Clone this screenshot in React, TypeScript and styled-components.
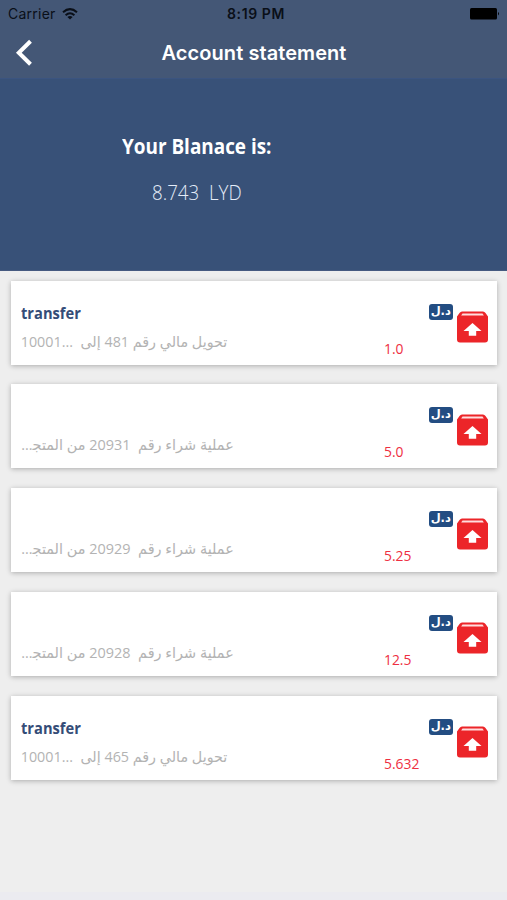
import React from "react";
import styled, { createGlobalStyle } from "styled-components";

const GlobalStyle = createGlobalStyle`
  * { box-sizing: border-box; }
  body { margin: 0; background: #eeeeee; }
`;

const Screen = styled.div`
  width: 507px;
  height: 900px;
  display: flex;
  flex-direction: column;
  overflow: hidden;
  background: #eeeeee;
  font-family: "Open Sans", "DejaVu Sans", sans-serif;
`;

const Header = styled.header`
  height: 78px;
  background: #445776;
  flex: none;
`;

const StatusBar = styled.div`
  height: 27px;
  padding: 0 7px 0 8px;
  display: grid;
  grid-template-columns: 1fr auto 1fr;
  align-items: center;
  color: #0a0f18;
  font-family: Inter, sans-serif;
  font-size: 14px;
  line-height: 27px;
`;

const Carrier = styled.div`
  display: flex;
  align-items: center;
  gap: 6px;
  letter-spacing: 0.25px;
`;

const Clock = styled.div`
  padding-left: 4px;
  font-weight: 600;
  letter-spacing: 0.6px;
`;

const BatteryIcon = styled.svg`
  justify-self: end;
  display: block;
`;

const NavBar = styled.div`
  height: 51px;
  padding: 0 15px;
  display: grid;
  grid-template-columns: 20px 1fr 20px;
  align-items: center;
`;

const BackButton = styled.button`
  padding: 0;
  border: 0;
  background: none;
  height: 28px;
  display: flex;
`;

const Title = styled.h1`
  margin: 0;
  padding-left: 1px;
  color: #fff;
  text-align: center;
  font: 600 20px/50px Inter, sans-serif;
  letter-spacing: 0.07px;
`;

const BalancePanel = styled.section`
  height: 193px;
  flex: none;
  padding: 53px 0 0 122px;
  background: #385178;
  border-top: 1px solid #3b5480;
  border-bottom: 1px solid #465a80;
  color: #fff;
`;

const Fit = styled.span<{ $x?: number; $from?: string }>`
  display: inline-block;
  white-space: pre;
  transform: scaleX(${(p) => p.$x ?? 1});
  transform-origin: ${(p) => p.$from ?? "left"} center;
`;

const BalanceLabel = styled.div`
  height: 28px;
  font-size: 21px;
  font-weight: 700;
  line-height: 28px;
`;

const BalanceValue = styled.div`
  height: 28px;
  margin: 19px 0 0 30px;
  font-size: 19.5px;
  font-weight: 300;
  line-height: 28px;
  color: #e4ecf8;
`;

const List = styled.main`
  padding: 9.6px 10px 0 10.5px;
  display: flex;
  flex-direction: column;
  gap: 19.8px;
  flex: 1;
`;

const Card = styled.article`
  height: 84px;
  flex: none;
  padding: 0 9px 0 10px;
  display: grid;
  grid-template-columns: 214px 1fr 45.5px 25px 34.5px;
  background: #fff;
  box-shadow: 0 1px 5px rgba(0, 0, 0, 0.28);
`;

const Details = styled.div`
  padding-top: 20px;
`;

const Kind = styled.div`
  height: 24px;
  color: #344c77;
  font-size: 16.5px;
  font-weight: 700;
  line-height: 24px;
`;

const Description = styled.div<{ $width: number }>`
  width: ${(p) => p.$width}px;
  height: 24px;
  margin-top: 4px;
  direction: rtl;
  white-space: nowrap;
  text-align: right;
  color: #b3b3b3;
  font-family: "Open Sans", "DejaVu Sans", sans-serif;
  font-size: 15px;
  line-height: 24px;
`;

const Amount = styled.div`
  grid-column: 3;
  padding: 57px 0 0 0.7px;
  color: #ee2f42;
  font-size: 14px;
  font-weight: 500;
  line-height: 22px;
`;

const Currency = styled.div`
  width: 24.5px;
  height: 16px;
  margin-top: 23px;
  border-radius: 3px;
  background: #234d82;
  color: #fff;
  text-align: center;
  direction: rtl;
  font: 700 11.5px/14px "DejaVu Sans", sans-serif;
`;

const OutIcon = styled.svg`
  margin: 30px 0 0 3px;
  width: 31px;
  height: 32px;
  display: block;
`;

const Footer = styled.div`
  height: 8px;
  flex: none;
  background: #ebebf0;
`;

type Entry = { kind?: string; number: string; amount: string };

const entries: Entry[] = [
  { kind: "transfer", number: "481", amount: "1.0" },
  { number: "20931", amount: "5.0" },
  { number: "20929", amount: "5.25" },
  { number: "20928", amount: "12.5" },
  { kind: "transfer", number: "465", amount: "5.632" },
];

// The directional marks keep the trailing "10001..." reading left to right.
const describe = (entry: Entry) =>
  entry.kind
    ? `تحويل مالي رقم ${entry.number} إلى  \u200e10001...\u200e`
    : `عملية شراء رقم  ${entry.number} من المتج\u200d...`;

const EntryCard = ({ entry }: { entry: Entry }) => (
  <Card>
    <Details>
      <Kind>{entry.kind && <Fit $x={0.89}>{entry.kind}</Fit>}</Kind>
      <Description $width={entry.kind ? 207 : 213}>
        <Fit $x={entry.kind ? 0.955 : 0.963} $from="right">
          {describe(entry)}
        </Fit>
      </Description>
    </Details>
    <Amount>
      <Fit $x={0.99}>{entry.amount}</Fit>
    </Amount>
    <Currency>د.ل</Currency>
    <OutIcon viewBox="0 0 31 32">
      <path
        d="M5 0.5H26Q27.5 0.5 28.5 2L31 5.5V28.5Q31 31.5 28 31.5H3Q0 31.5 0 28.5V5.5L2.5 2Q3.5 0.5 5 0.5Z"
        fill="#ec2529"
      />
      <path d="M5.5 2.4H25.5L26.8 4.4H4.2Z" fill="#ffdede" />
      <path d="M15.5 12L24.5 20H19.2V24.7H11.8V20H6.5Z" fill="#fff" />
    </OutIcon>
  </Card>
);

export default function App() {
  return (
    <Screen>
      <GlobalStyle />
      <Header>
        <StatusBar>
          <Carrier>
            <span>Carrier</span>
            <svg width="16" height="12" viewBox="0 0 16 12" fill="none" stroke="#0a0f18" strokeWidth="2">
              <path d="M1 4.3Q8-2 15 4.3M3.6 7.2Q8 3.3 12.4 7.2" />
              <path d="M8 11.5L5.4 9Q8 7 10.6 9Z" fill="#0a0f18" stroke="none" />
            </svg>
          </Carrier>
          <Clock>8:19 PM</Clock>
          <BatteryIcon width="30" height="12" viewBox="0 0 30 12">
            <rect width="27" height="11.5" rx="1.5" fill="#000" />
            <path d="M28 4Q30 5.7 28 7.5Z" fill="#000" />
          </BatteryIcon>
        </StatusBar>
        <NavBar>
          <BackButton aria-label="Back">
            <svg width="18" height="28" viewBox="0 0 18 28" fill="none" stroke="#fff" strokeWidth="4">
              <path d="M15.5 2.2L3.8 13.7L15.5 25.2" />
            </svg>
          </BackButton>
          <Title>Account statement</Title>
        </NavBar>
      </Header>
      <BalancePanel>
        <BalanceLabel>
          <Fit $x={0.9}>Your Blanace is:</Fit>
        </BalanceLabel>
        <BalanceValue>
          <Fit $x={0.96}>{"8.743  LYD"}</Fit>
        </BalanceValue>
      </BalancePanel>
      <List>
        {entries.map((entry) => (
          <EntryCard key={entry.number} entry={entry} />
        ))}
      </List>
      <Footer />
    </Screen>
  );
}
